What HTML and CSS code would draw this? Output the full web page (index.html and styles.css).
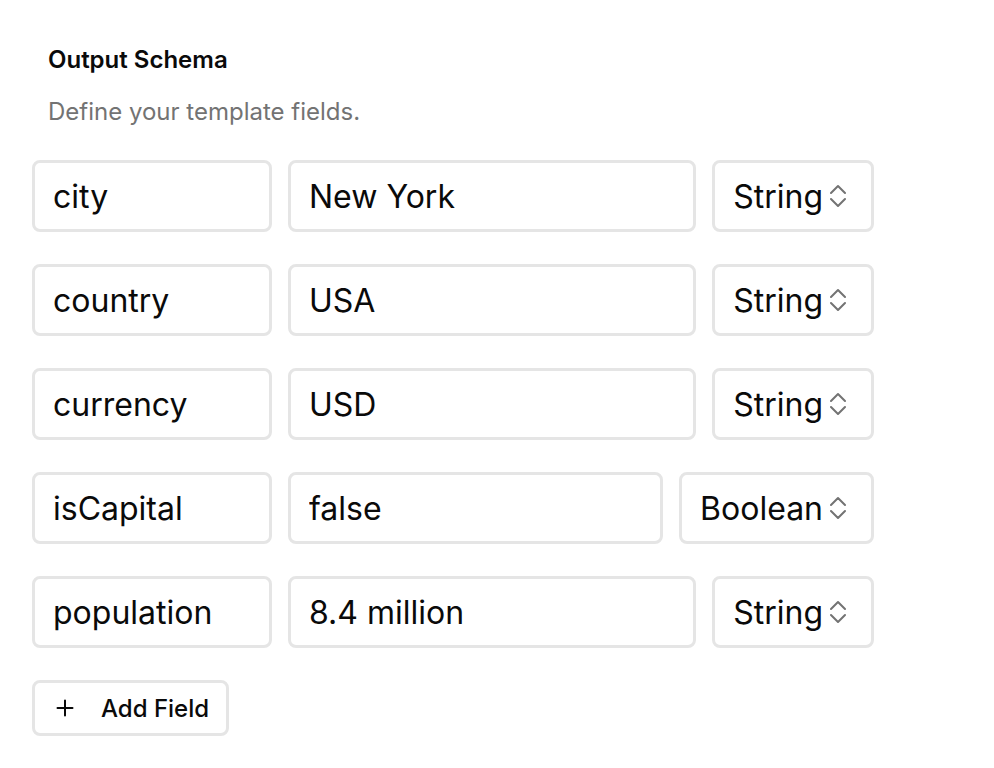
FILE: index.html
```html
<!DOCTYPE html>
<html lang="en">
<head>
    <meta charset="UTF-8">
    <title>Output Schema</title>
    <link rel="stylesheet" href="styles.css">
</head>
<body>
    <div class="panel">
        <div class="header">
            <h2>Output Schema</h2>
            <p>Define your template fields.</p>
        </div>

        <div class="fields">
            <div class="field-row">
                <input class="field-name" type="text" value="city">
                <input class="field-value" type="text" value="New York">
                <div class="type-select">
                    <span>String</span>
                    <svg width="16" height="24" viewBox="0 0 16 24"><path d="M1 9 L8 2 L15 9 M1 15 L8 22 L15 15"/></svg>
                </div>
            </div>
            <div class="field-row">
                <input class="field-name" type="text" value="country">
                <input class="field-value" type="text" value="USA">
                <div class="type-select">
                    <span>String</span>
                    <svg width="16" height="24" viewBox="0 0 16 24"><path d="M1 9 L8 2 L15 9 M1 15 L8 22 L15 15"/></svg>
                </div>
            </div>
            <div class="field-row">
                <input class="field-name" type="text" value="currency">
                <input class="field-value" type="text" value="USD">
                <div class="type-select">
                    <span>String</span>
                    <svg width="16" height="24" viewBox="0 0 16 24"><path d="M1 9 L8 2 L15 9 M1 15 L8 22 L15 15"/></svg>
                </div>
            </div>
            <div class="field-row">
                <input class="field-name" type="text" value="isCapital">
                <input class="field-value" type="text" value="false">
                <div class="type-select">
                    <span>Boolean</span>
                    <svg width="16" height="24" viewBox="0 0 16 24"><path d="M1 9 L8 2 L15 9 M1 15 L8 22 L15 15"/></svg>
                </div>
            </div>
            <div class="field-row">
                <input class="field-name" type="text" value="population">
                <input class="field-value" type="text" value="8.4 million">
                <div class="type-select">
                    <span>String</span>
                    <svg width="16" height="24" viewBox="0 0 16 24"><path d="M1 9 L8 2 L15 9 M1 15 L8 22 L15 15"/></svg>
                </div>
            </div>
        </div>

        <button class="add-field">
            <svg width="24" height="24" viewBox="0 0 24 24"><path d="M12 4.5 V19.5 M4.5 12 H19.5"/></svg>
            <span>Add Field</span>
        </button>
    </div>
</body>
</html>
```

FILE: styles.css
```css
/* Page */
body {
    margin: 0;
    background-color: #fff;
    color: #0a0a0a;
    font-family: 'Inter', 'Noto Sans', sans-serif;
}

.panel {
    padding: 44px 32px;
    width: 842px;
}

/* Heading */
.header {
    padding-left: 16px;
    margin-bottom: 32px;
}

.header h2 {
    margin: 0;
    font-size: 24px;
    line-height: 32px;
    font-weight: 600;
}

.header p {
    margin: 20px 0 0;
    font-size: 24px;
    line-height: 32px;
    color: #737373;
}

/* Field rows */
.fields {
    display: flex;
    flex-direction: column;
    gap: 32px;
}

.field-row {
    display: flex;
    gap: 16px;
}

.field-name,
.field-value,
.type-select {
    box-sizing: border-box;
    height: 72px;
    border: 3px solid #e5e5e5;
    border-radius: 8px;
    background-color: #fff;
    font-family: inherit;
    font-size: 32px;
    color: #0a0a0a;
    padding: 0 18px;
    margin: 0;
    outline: none;
}

.field-name {
    width: 240px;
}

.field-value {
    flex: 1;
    min-width: 0;
}

.type-select {
    display: flex;
    align-items: center;
    gap: 7px;
    padding-right: 25px;
}

.type-select svg,
.add-field svg {
    fill: none;
    stroke: #737373;
    stroke-width: 2;
    stroke-linecap: round;
    stroke-linejoin: round;
}

/* Add button */
.add-field {
    margin-top: 32px;
    height: 56px;
    display: flex;
    align-items: center;
    gap: 24px;
    padding: 0 17px 0 18px;
    border: 3px solid #e5e5e5;
    border-radius: 8px;
    background-color: #fff;
    font-family: inherit;
    font-size: 24px;
    font-weight: 500;
    color: #0a0a0a;
    cursor: pointer;
}

.add-field svg {
    stroke: #0a0a0a;
}
```
